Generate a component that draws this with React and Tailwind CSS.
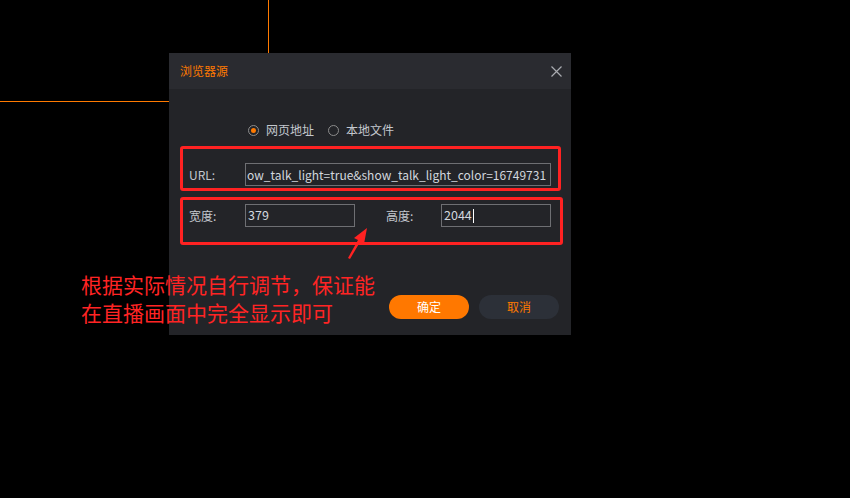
import React from "react";

const font = { fontFamily: '"Noto Sans CJK SC", "Noto Sans", sans-serif' };

function Radio({ checked, label }) {
  return (
    <label className="flex items-center gap-[7px]">
      <span className="flex h-[11px] w-[11px] items-center justify-center rounded-full border border-[#8c8c8c]">
        {checked && <span className="h-[5px] w-[5px] rounded-full bg-[#ff7a00]" />}
      </span>
      <span className="text-[12px] leading-none text-[#c4c8ce]">{label}</span>
    </label>
  );
}

export default function App() {
  return (
    <div className="relative h-[498px] w-[850px] overflow-hidden bg-black" style={font}>
      {/* orange guide lines */}
      <div className="absolute left-[268px] top-0 h-[53px] w-px bg-[#ff7a00]" />
      <div className="absolute left-0 top-[101px] h-px w-[169px] bg-[#ff7a00]" />

      <div className="pl-[169px] pt-[53px]">
        <div className="flex h-[282px] w-[402px] flex-col bg-[#232428]">
          <div className="flex h-[36px] items-center justify-between bg-[#2a2b30] pl-[11px] pr-[9px]">
            <span className="text-[12px] text-[#ff7a00]">浏览器源</span>
            <svg width="11" height="11" viewBox="0 0 11 11">
              <path d="M0.5 0.5 L10.5 10.5 M10.5 0.5 L0.5 10.5" stroke="#a9abb0" strokeWidth="1.2" />
            </svg>
          </div>
          <div className="flex flex-1 flex-col pl-[20px] pr-[12px]">
            <div className="mt-[34px] flex h-[14px] items-center gap-[14px] pl-[59px]">
              <Radio checked label="网页地址" />
              <Radio label="本地文件" />
            </div>
            <div className="mt-[26px] flex h-[23px] items-center">
              <span className="w-[56px] text-[12px] text-[#c4c8ce]">URL:</span>
              <div className="flex h-[23px] w-[306px] items-center overflow-hidden border border-[#6e6f73] pl-[1px]">
                <span className="whitespace-nowrap text-[12px] text-[#d2d7de]">
                  ow_talk_light=true&amp;show_talk_light_color=16749731
                </span>
              </div>
            </div>
            <div className="mt-[18px] flex h-[23px] items-center">
              <span className="w-[56px] text-[12px] text-[#c4c8ce]">宽度:</span>
              <div className="flex h-[23px] w-[110px] items-center border border-[#6e6f73] pl-[2px]">
                <span className="text-[12.5px] text-[#d2d7de]">379</span>
              </div>
              <span className="ml-[31px] w-[55px] text-[12px] text-[#c4c8ce]">高度:</span>
              <div className="flex h-[23px] w-[110px] items-center border border-[#6e6f73] pl-[2px]">
                <span className="text-[12.5px] text-[#d2d7de]">2044</span>
                <span className="ml-px h-[14px] w-px bg-white" />
              </div>
            </div>
            <div className="mt-[68px] flex justify-end gap-[10px]">
              <button className="h-[24px] w-[80px] rounded-full bg-[#ff7800] text-[12px] text-white">确定</button>
              <button className="h-[24px] w-[80px] rounded-full bg-[#2c3038] text-[12px] text-[#ff7a00]">取消</button>
            </div>
          </div>
        </div>
      </div>

      {/* annotation boxes */}
      <div className="absolute left-[180px] top-[146px] h-[45px] w-[381px] rounded-[3px] border-[3px] border-[#ff2222]" />
      <div className="absolute left-[180px] top-[197px] h-[48px] w-[383px] rounded-[3px] border-[3px] border-[#ff2222]" />

      {/* arrow */}
      <svg className="absolute left-0 top-0" width="850" height="498" viewBox="0 0 850 498">
        <path d="M348 258 L358 240 L354 238 L367 228 L364 244 L360 242 L350 259 Z" fill="#ff2222" />
      </svg>

      {/* annotation text */}
      <div className="absolute left-[81px] top-[270px] text-[21px] leading-[28px] text-[#ff2424]">
        <div>根据实际情况自行调节，保证能</div>
        <div>在直播画面中完全显示即可</div>
      </div>
    </div>
  );
}
